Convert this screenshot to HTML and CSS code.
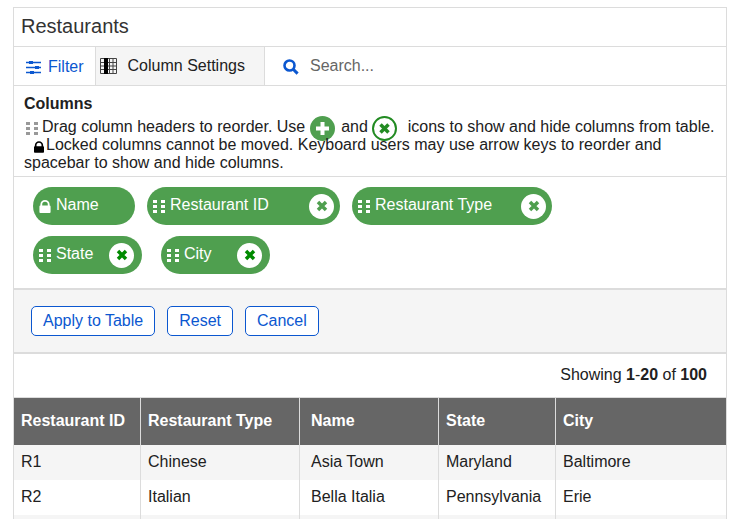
FILE: index.html
```html
<!DOCTYPE html>
<html lang="en">
<head>
<meta charset="utf-8">
<title>Restaurants</title>
<link rel="stylesheet" href="styles.css">
</head>
<body>
<svg class="symbols" aria-hidden="true">
  <symbol id="grip" viewBox="0 0 12 13"><path d="M0 0h4v3H0zM8 0h4v3H8zM0 5h4v3H0zM8 5h4v3H8zM0 10h4v3H0zM8 10h4v3H8z"/></symbol>
  <symbol id="lock" viewBox="0 0 12 14"><path d="M1 6V5a5 5 0 0 1 10 0v1a1 1 0 0 1 1 1v6a1 1 0 0 1-1 1H1a1 1 0 0 1-1-1V7a1 1 0 0 1 1-1zM3 6h6V5a3 3 0 0 0-6 0z"/></symbol>
  <symbol id="cross" viewBox="0 0 12 12"><path d="M2 2l8 8M10 2l-8 8" fill="none" stroke="currentColor" stroke-width="3.5"/></symbol>
</svg>
<main class="panel">
  <h1 class="title">Restaurants</h1>
  <div class="toolbar">
    <button class="tab tab-filter" type="button">
      <svg width="15" height="13" viewBox="0 0 15 13"><path d="M0 1.5h15M0 6.5h15M0 11.5h15" stroke="currentColor" stroke-width="1.4"/><path d="M3 0h4v3H3zM9 5h4v3H9zM4 10h4v3H4z" fill="currentColor"/></svg>
      Filter
    </button>
    <button class="tab tab-columns" type="button">
      <svg width="17" height="16" viewBox="0 0 17 16"><path d="M.5.5h16v15H.5zM0 4.5h17M0 8h17M0 11.5h17M9.5 0v16M13 0v16" fill="none" stroke="#444" stroke-width="1"/><path d="M4 0h4v16H4z"/></svg>
      Column Settings
    </button>
    <label class="search">
      <svg width="16" height="16" viewBox="0 0 16 16" fill="none" stroke="currentColor"><circle cx="6.5" cy="6.5" r="5" stroke-width="2.6"/><path d="M10.2 10.2l4.4 4.4" stroke-width="3"/></svg>
      <input type="search" placeholder="Search..." aria-label="Search">
    </label>
  </div>
  <section class="help">
    <h2>Columns</h2>
    <p><svg class="help-grip"><use href="#grip"/></svg>Drag column headers to reorder. Use <svg class="help-circle" viewBox="0 0 25 25"><circle cx="12.5" cy="12.5" r="12.5" fill="#4f9f4f"/><path d="M12.5 6v13M6 12.5h13" stroke="#fff" stroke-width="4"/></svg> and <svg class="help-circle help-hide" viewBox="0 0 25 25"><circle cx="12.5" cy="12.5" r="11.5" fill="#fff" stroke="#228b22" stroke-width="2"/><path d="M8.5 8.5l8 8M16.5 8.5l-8 8" stroke="#228b22" stroke-width="3.5"/></svg> icons to show and hide columns from table. <svg class="help-lock"><use href="#lock"/></svg>Locked columns cannot be moved. Keyboard users may use arrow keys to reorder and spacebar to show and hide columns.</p>
  </section>
  <section class="chips">
    <ul class="chip-row">
      <li class="chip chip-name"><svg class="lock"><use href="#lock"/></svg><span>Name</span></li>
      <li class="chip chip-id"><svg class="grip"><use href="#grip"/></svg><span>Restaurant ID</span><button type="button" aria-label="Hide Restaurant ID"><svg><use href="#cross"/></svg></button></li>
      <li class="chip chip-type"><svg class="grip"><use href="#grip"/></svg><span>Restaurant Type</span><button type="button" aria-label="Hide Restaurant Type"><svg><use href="#cross"/></svg></button></li>
    </ul>
    <ul class="chip-row chip-row-short">
      <li class="chip"><svg class="grip"><use href="#grip"/></svg><span>State</span><button type="button" aria-label="Hide State"><svg><use href="#cross"/></svg></button></li>
      <li class="chip"><svg class="grip"><use href="#grip"/></svg><span>City</span><button type="button" aria-label="Hide City"><svg><use href="#cross"/></svg></button></li>
    </ul>
  </section>
  <div class="actions">
    <button type="button">Apply to Table</button>
    <button type="button">Reset</button>
    <button type="button">Cancel</button>
  </div>
  <p class="count">Showing <b>1</b>-<b>20</b> of <b>100</b></p>
  <table>
    <colgroup><col class="col-id"><col class="col-type"><col class="col-name"><col class="col-state"><col></colgroup>
    <thead><tr><th>Restaurant ID</th><th>Restaurant Type</th><th class="name">Name</th><th>State</th><th>City</th></tr></thead>
    <tbody>
      <tr><td>R1</td><td>Chinese</td><td class="name">Asia Town</td><td>Maryland</td><td>Baltimore</td></tr>
      <tr><td>R2</td><td>Italian</td><td class="name">Bella Italia</td><td>Pennsylvania</td><td>Erie</td></tr>
      <tr><td></td><td></td><td></td><td></td><td></td></tr>
    </tbody>
  </table>
</main>
</body>
</html>
```
FILE: styles.css
```css
* { box-sizing: border-box; }

html { scrollbar-width: none; }

body {
  margin: 7px 15px 0 13px;
  background: #fff;
  color: #212121;
  font: 16px/18px "Liberation Sans", Arial, sans-serif;
}

h1, h2, p, ul { margin: 0; padding: 0; }

button, input { font: inherit; }

button { cursor: pointer; }

.symbols { position: absolute; width: 0; height: 0; }

.panel { border: 1px solid #dcdcdc; border-bottom: 0; }

.title {
  padding: 7px 7px 8px;
  color: #333;
  font-size: 20px;
  font-weight: 400;
  line-height: 23px;
}

.toolbar {
  display: flex;
  height: 40px;
  border: solid #dcdcdc;
  border-width: 1px 0;
}

.tab {
  display: flex;
  align-items: center;
  border: 0;
  background: #fff;
}

.tab-filter { gap: 7px; padding: 2px 11px 0 12px; color: #0b57d0; }

.tab-columns {
  gap: 11px;
  padding: 0 19px 0 4px;
  border: solid #dcdcdc;
  border-width: 0 1px;
  background: #f5f5f5;
  color: #212121;
}

.search {
  display: flex;
  flex: 1;
  align-items: center;
  gap: 11px;
  padding-left: 18px;
  color: #0b57d0;
}

.search svg { margin-top: 2px; }

.search input {
  flex: 1;
  min-width: 0;
  padding: 0;
  border: 0;
  outline: 0;
  background: none;
}

.search input::placeholder { color: #666; opacity: 1; }

.help { padding: 9px 8px 4px 10px; border-bottom: 1px solid #dcdcdc; }

.help h2 { margin-bottom: 5px; font-size: 16px; line-height: 18px; }

.help svg { display: inline-block; }

.help-grip {
  width: 12px;
  height: 13px;
  margin: 0 4px 0 2px;
  vertical-align: -3px;
  fill: #999;
}

.help-circle { width: 25px; height: 25px; margin: -8px 2px -8px 0; vertical-align: -1px; }

.help-hide { margin-right: 6px; }

.help-lock {
  width: 10px;
  height: 12px;
  margin: 0 2px 0 10px;
  vertical-align: -3px;
  fill: #000;
}

.chips {
  display: flex;
  flex-direction: column;
  gap: 11px;
  padding: 10px 19px 14px;
}

.chip-row { display: flex; gap: 12px; list-style: none; }

.chip-row-short { gap: 19px; }

.chip {
  display: flex;
  align-items: center;
  gap: 5px;
  height: 38px;
  padding: 0 6px;
  border-radius: 19px;
  background: #4f9f4f;
  color: #fff;
}

.chip span { padding-bottom: 3px; }

.chip-name { width: 102px; }
.chip-id { width: 193px; }
.chip-type { width: 200px; }
.chip-row-short .chip { width: 109px; padding-right: 8px; }

.chip .grip { width: 12px; height: 13px; fill: #fff; }
.chip .lock { width: 12px; height: 13px; fill: #fff; }

.chip button {
  display: grid;
  place-items: center;
  width: 25px;
  height: 25px;
  margin-left: auto;
  padding: 0;
  border: 0;
  border-radius: 50%;
  background: #fff;
  color: #4f9f4f;
}

.chip-row-short button { color: #008a00; }

.chip button svg { width: 12px; height: 12px; }

.actions {
  display: flex;
  gap: 12px;
  padding: 16px 17px;
  border: solid #dcdcdc;
  border-width: 2px 0;
  background: #f5f5f5;
}

.actions button {
  height: 30px;
  padding: 0 11px;
  border: 1px solid #0b57d0;
  border-radius: 5px;
  background: #fff;
  color: #0b57d0;
}

.count { padding: 12px 19px 13px; text-align: right; }

table {
  width: 100%;
  border-top: 1px solid #dcdcdc;
  border-collapse: separate;
  border-spacing: 0;
  table-layout: fixed;
}

.col-id { width: 127px; }
.col-type { width: 159px; }
.col-name { width: 139px; }
.col-state { width: 117px; }

th, td {
  height: 35px;
  padding: 0 0 1px 7px;
  border-right: 1px solid #dcdcdc;
  text-align: left;
  white-space: nowrap;
}

th { height: 47px; background: #666; color: #fff; }

th:last-child, td:last-child { border-right: 0; }

.name { padding-left: 11px; }

tbody tr:nth-child(odd) { background: #f5f5f5; }
```
